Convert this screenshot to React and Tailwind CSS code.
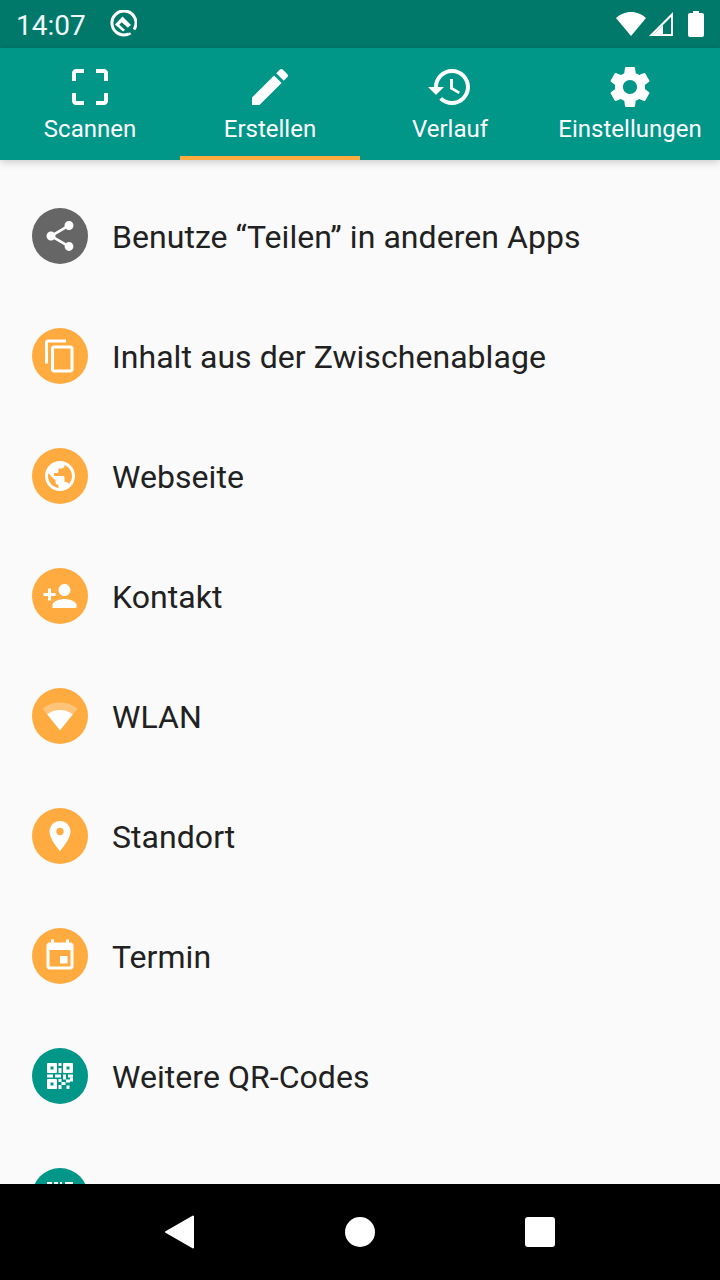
import React from "react";

const FONT = "font-['Roboto',sans-serif]";

const Icon = ({ d, size = 48, className = "fill-white" }) => (
  <svg width={size} height={size} viewBox="0 0 24 24" className={className}>
    <path d={d} />
  </svg>
);

const paths = {
  scan: "M3 5v4h2V5h4V3H5c-1.1 0-2 .9-2 2zm2 10H3v4c0 1.1.9 2 2 2h4v-2H5v-4zm14 4h-4v2h4c1.1 0 2-.9 2-2v-4h-2v4zm0-16h-4v2h4v4h2V5c0-1.1-.9-2-2-2z",
  create: "M3 17.25V21h3.75L17.81 9.94l-3.75-3.75L3 17.25zM20.71 7.04c.39-.39.39-1.02 0-1.41l-2.34-2.34c-.39-.39-1.02-.39-1.41 0l-1.83 1.83 3.75 3.75 1.83-1.83z",
  history: "M13 3c-4.97 0-9 4.03-9 9H1l3.89 3.89.07.14L9 12H6c0-3.87 3.13-7 7-7s7 3.13 7 7-3.13 7-7 7c-1.93 0-3.68-.79-4.94-2.06l-1.42 1.42C8.27 19.99 10.51 21 13 21c4.97 0 9-4.03 9-9s-4.03-9-9-9zm-1 5v5l4.28 2.54.72-1.21-3.5-2.08V8H12z",
  settings: "M19.43 12.98c.04-.32.07-.64.07-.98s-.03-.66-.07-.98l2.11-1.65c.19-.15.24-.42.12-.64l-2-3.46c-.12-.22-.39-.3-.61-.22l-2.49 1c-.52-.4-1.08-.73-1.69-.98l-.38-2.65C14.46 2.18 14.25 2 14 2h-4c-.25 0-.46.18-.49.42l-.38 2.65c-.61.25-1.17.59-1.69.98l-2.49-1c-.23-.09-.49 0-.61.22l-2 3.46c-.13.22-.07.49.12.64l2.11 1.65c-.04.32-.07.65-.07.98s.03.66.07.98l-2.11 1.65c-.19.15-.24.42-.12.64l2 3.46c.12.22.39.3.61.22l2.49-1c.52.4 1.08.73 1.69.98l.38 2.65c.03.24.24.42.49.42h4c.25 0 .46-.18.49-.42l.38-2.65c.61-.25 1.17-.59 1.69-.98l2.49 1c.23.09.49 0 .61-.22l2-3.46c.12-.22.07-.49-.12-.64l-2.11-1.65zM12 15.5c-1.93 0-3.5-1.57-3.5-3.5s1.57-3.5 3.5-3.5 3.5 1.57 3.5 3.5-1.57 3.5-3.5 3.5z",
  share: "M18 16.08c-.76 0-1.44.3-1.96.77L8.91 12.7c.05-.23.09-.46.09-.7s-.04-.47-.09-.7l7.05-4.11c.54.5 1.25.81 2.04.81 1.66 0 3-1.34 3-3s-1.34-3-3-3-3 1.34-3 3c0 .24.04.47.09.7L8.04 9.81C7.5 9.31 6.79 9 6 9c-1.66 0-3 1.34-3 3s1.34 3 3 3c.79 0 1.5-.31 2.04-.81l7.12 4.16c-.05.21-.08.43-.08.65 0 1.61 1.31 2.92 2.92 2.92 1.61 0 2.92-1.31 2.92-2.92s-1.31-2.92-2.92-2.92z",
  copy: "M16 1H4c-1.1 0-2 .9-2 2v14h2V3h12V1zm3 4H8c-1.1 0-2 .9-2 2v14c0 1.1.9 2 2 2h11c1.1 0 2-.9 2-2V7c0-1.1-.9-2-2-2zm0 16H8V7h11v14z",
  globe: "M12 2C6.48 2 2 6.48 2 12s4.48 10 10 10 10-4.48 10-10S17.52 2 12 2zm-1 17.93c-3.95-.49-7-3.85-7-7.93 0-.62.08-1.21.21-1.79L9 15v1c0 1.1.9 2 2 2v1.93zm6.9-2.54c-.26-.81-1-1.39-1.9-1.39h-1v-3c0-.55-.45-1-1-1H8v-2h2c.55 0 1-.45 1-1V7h2c1.1 0 2-.9 2-2v-.41c2.93 1.19 5 4.06 5 7.41 0 2.08-.8 3.97-2.1 5.39z",
  personAdd: "M15 12c2.21 0 4-1.79 4-4s-1.79-4-4-4-4 1.79-4 4 1.79 4 4 4zm-9-2V7H4v3H1v2h3v3h2v-3h3v-2H6zm9 4c-2.67 0-8 1.34-8 4v2h16v-2c0-2.66-5.33-4-8-4z",
  place: "M12 2C8.13 2 5 5.13 5 9c0 5.25 7 13 7 13s7-7.75 7-13c0-3.87-3.13-7-7-7zm0 9.500c-1.38 0-2.500-1.120-2.500-2.500s1.120-2.500 2.500-2.500 2.500 1.120 2.500 2.500-1.120 2.500-2.500 2.500z",
  event: "M17 12h-5v5h5v-5zM16 1v2H8V1H6v2H5c-1.11 0-1.99.9-1.99 2L3 19c0 1.1.89 2 2 2h14c1.1 0 2-.9 2-2V5c0-1.1-.9-2-2-2h-1V1h-2zm3 18H5V8h14v11z",
};

const WifiIcon = () => (
  <svg width="36" height="36" viewBox="0 0 24 24" className="fill-white">
    <path fillOpacity="0.3" d="M12.01 21.49L23.64 7c-.45-.34-4.93-4-11.64-4C5.28 3 .81 6.66.36 7l11.63 14.49.01.01.01-.01z" />
    <path d="M3.53 10.95l8.46 10.54.01.01.01-.01 8.46-10.54C20.04 10.62 16.81 8 12 8c-4.81 0-8.04 2.62-8.47 2.95z" />
  </svg>
);

// QR-Symbol: dicke Finder-Quadrate und verstreute Module
const QrIcon = () => (
  <svg width="36" height="36" viewBox="0 0 36 36" className="fill-white">
    <path
      fillRule="evenodd"
      d="M6 5h8a1 1 0 0 1 1 1v8a1 1 0 0 1-1 1H6a1 1 0 0 1-1-1V6a1 1 0 0 1 1-1zM8.500 8.500v3h3v-3zM22 5h8a1 1 0 0 1 1 1v8a1 1 0 0 1-1 1h-8a1 1 0 0 1-1-1V6a1 1 0 0 1 1-1zM24.500 8.500v3h3v-3zM6 21h8a1 1 0 0 1 1 1v8a1 1 0 0 1-1 1H6a1 1 0 0 1-1-1v-8a1 1 0 0 1 1-1zM8.500 24.500v3h3v-3z"
    />
    <rect x="16.500" y="5" width="3" height="3" />
    <rect x="16.500" y="10" width="3" height="5" />
    <rect x="5" y="16.500" width="6" height="3" />
    <rect x="13" y="16.500" width="6" height="3" />
    <rect x="21" y="16.500" width="3" height="5" />
    <rect x="26" y="16.500" width="5" height="3" />
    <rect x="28" y="19.500" width="3" height="4" />
    <rect x="16.500" y="21" width="3" height="3" />
    <rect x="24" y="21.500" width="4" height="3" />
    <rect x="19.500" y="24" width="4" height="3" />
    <rect x="16.500" y="27" width="3" height="4" />
    <rect x="24.500" y="27.500" width="3" height="3.500" />
  </svg>
);

// nur die Oberkante ist sichtbar, der Rest liegt hinter der Navigationsleiste
const BarcodeIcon = () => (
  <svg width="36" height="36" viewBox="0 0 36 36" className="fill-white">
    <path d="M5 4h5v3H5zM12 4h4v28h-4zM18 4h2v28h-2zM23 4h8v3h-8z" />
  </svg>
);

const tabs = [
  { label: "Scannen", icon: paths.scan },
  { label: "Erstellen", icon: paths.create, active: true },
  { label: "Verlauf", icon: paths.history },
  { label: "Einstellungen", icon: paths.settings },
];

const ORANGE = "bg-[#ffab40]";

const items = [
  { label: "Benutze “Teilen” in anderen Apps", icon: <Icon d={paths.share} size={36} />, bg: "bg-[#666666]" },
  { label: "Inhalt aus der Zwischenablage", icon: <Icon d={paths.copy} size={36} />, bg: ORANGE },
  { label: "Webseite", icon: <Icon d={paths.globe} size={36} />, bg: ORANGE },
  { label: "Kontakt", icon: <Icon d={paths.personAdd} size={36} />, bg: ORANGE },
  { label: "WLAN", icon: <WifiIcon />, bg: ORANGE },
  { label: "Standort", icon: <Icon d={paths.place} size={36} />, bg: ORANGE },
  { label: "Termin", icon: <Icon d={paths.event} size={36} />, bg: ORANGE },
  { label: "Weitere QR-Codes", icon: <QrIcon />, bg: "bg-[#009688]" },
  { label: "", icon: <BarcodeIcon />, bg: "bg-[#009688]" },
];

export default function App() {
  return (
    <div className={`${FONT} w-[720px] h-[1280px] flex flex-col overflow-hidden bg-[#fafafa]`}>
      {/* Statusleiste */}
      <div className="h-12 shrink-0 bg-[#00796b] flex items-center pl-4 pr-4 text-white">
        <span className="text-[28px] leading-none mt-[3px] opacity-95 w-[70px]">14:07</span>
        <svg width="28" height="28" viewBox="0 0 28 28" className="ml-[23px]">
          <path d="M21.500 23A12 12 0 1 1 25 19.500" fill="none" stroke="white" strokeWidth="3" />
          <path d="M13.500 6.500L22 15L14 21.500L6 14.500z" fill="white" strokeLinejoin="round" />
          <path d="M11.500 13.500L21 22" stroke="#00796b" strokeWidth="3.500" />
        </svg>
        <div className="ml-auto flex items-center">
          <svg width="30" height="24" viewBox="0 0 30 24">
            <path d="M15 24L0 6C4 2.500 9 0 15 0s11 2.500 15 6z" fill="white" />
          </svg>
          <svg width="24" height="24" viewBox="0 0 24 24" className="ml-[3px]">
            <path d="M24 0V24H0z M22 5L5 22H22z" fill="white" fillRule="evenodd" />
            <path d="M14 13L5 22H14z" fill="white" />
          </svg>
          <svg width="16" height="26" viewBox="0 0 16 26" className="ml-[15px]">
            <path d="M5 0h6v2h3a2 2 0 0 1 2 2v20a2 2 0 0 1-2 2H2a2 2 0 0 1-2-2V4a2 2 0 0 1 2-2h3z" fill="white" />
          </svg>
        </div>
      </div>

      {/* Tabs */}
      <div className="h-[112px] shrink-0 bg-[#009688] flex relative z-10 shadow-[0_2px_8px_rgba(0,0,0,0.2)]">
        {tabs.map((tab) => (
          <div key={tab.label} className="w-[180px] flex flex-col items-center pt-[15px] relative">
            <Icon d={tab.icon} />
            <span className="text-2xl leading-7 mt-1 text-white whitespace-nowrap">{tab.label}</span>
            {tab.active && <div className="absolute left-0 right-0 bottom-0 h-1 bg-[#ffab40]" />}
          </div>
        ))}
      </div>

      {/* Liste */}
      <div className="flex-1 min-h-0 overflow-hidden pt-4">
        {items.map((item, i) => (
          <div key={i} className="h-[120px] flex items-center pl-8">
            <div className={`w-14 h-14 rounded-full shrink-0 flex items-center justify-center ${item.bg}`}>
              {item.icon}
            </div>
            <span className="ml-6 mt-[2px] text-[32px] leading-none tracking-[0.05px] text-[#212121] whitespace-nowrap">{item.label}</span>
          </div>
        ))}
      </div>

      {/* Navigationsleiste */}
      <div className="h-24 shrink-0 bg-black relative z-10 flex items-center">
        <div className="w-[360px] flex justify-center">
          <svg width="30" height="34" viewBox="0 0 30 34">
            <path d="M1 17L28 1.500V32.500z" fill="white" stroke="white" strokeWidth="2" strokeLinejoin="round" />
          </svg>
        </div>
        <div className="w-[30px] h-[30px] rounded-full bg-white -ml-[15px]" />
        <div className="w-[30px] h-[30px] rounded-[3px] bg-white ml-[150px]" />
      </div>
    </div>
  );
}
